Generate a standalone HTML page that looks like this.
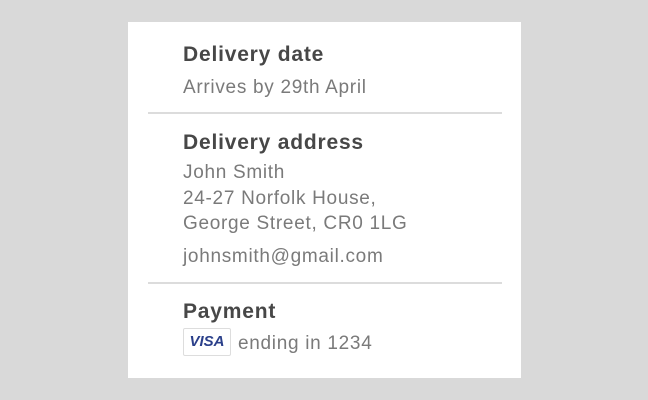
<!DOCTYPE html>
<html><head><style>
body{margin:0;width:648px;height:400px;background:#d9d9d9;font-family:"Liberation Sans",sans-serif;position:relative;overflow:hidden}
.card{position:absolute;left:128px;top:22px;width:393px;height:356px;background:#fff}
.t{position:absolute;left:55px;font-size:21px;letter-spacing:0.8px;font-weight:bold;color:#474747;line-height:24px;white-space:nowrap}
.b{position:absolute;left:55px;font-size:19px;letter-spacing:0.7px;color:#7a7a7a;line-height:22px;white-space:nowrap}
.hr{position:absolute;left:20px;width:354px;height:2px;background:#dcdcdc}
.visa{position:absolute;left:55px;top:306px;width:46px;height:26px;border:1px solid #ddd;border-radius:2px;font-weight:bold;font-style:italic;color:#2a3f8a;font-size:15px;line-height:26px;text-align:center}
</style></head><body>
<div class="card">
<div class="t" style="top:21px">Delivery date</div>
<div class="b" style="top:55px">Arrives by 29th April</div>
<div class="hr" style="top:90px"></div>
<div class="t" style="top:109px">Delivery address</div>
<div class="b" style="top:140px">John Smith</div>
<div class="b" style="top:166px">24-27 Norfolk House,</div>
<div class="b" style="top:191px">George Street, CR0 1LG</div>
<div class="b" style="top:224px">johnsmith@gmail.com</div>
<div class="hr" style="top:260px"></div>
<div class="t" style="top:278px">Payment</div>
<div class="visa">VISA</div>
<div class="b" style="top:311px;left:110px">ending in 1234</div>
</div>
</body></html>
